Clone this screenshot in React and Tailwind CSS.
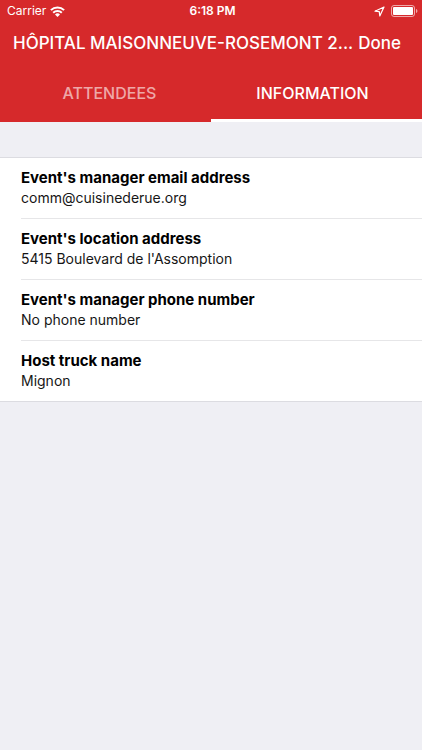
import React, { useState } from 'react';

const TABS = ['ATTENDEES', 'INFORMATION'];

const DETAILS = [
  { label: "Event's manager email address", value: 'comm@cuisinederue.org' },
  { label: "Event's location address", value: "5415 Boulevard de l'Assomption" },
  { label: "Event's manager phone number", value: 'No phone number' },
  { label: 'Host truck name', value: 'Mignon' },
];

function WifiIcon() {
  return (
    <svg width="15" height="11" viewBox="0 0 15 11" fill="none" stroke="currentColor" strokeWidth="2">
      <path d="M0.9 4.100a9.400 9.400 0 0 1 13.200 0" />
      <path d="M3.200 6.700a6.100 6.100 0 0 1 8.600 0" />
      <path d="M7.500 10.900 5 8.500a3.600 3.600 0 0 1 5 0Z" fill="currentColor" stroke="none" />
    </svg>
  );
}

function LocationIcon() {
  return (
    <svg width="11" height="11" viewBox="0 0 11 11" fill="none" stroke="currentColor" strokeWidth="1.2" strokeLinejoin="round">
      <path d="M10 1 1 5.200l4.300.5.5 4.300Z" />
    </svg>
  );
}

function BatteryIcon() {
  return (
    <svg width="27" height="12" viewBox="0 0 27 12" fill="none">
      <rect x="0.5" y="0.5" width="23" height="11" rx="2.5" stroke="currentColor" strokeOpacity="0.6" />
      <rect x="2" y="2" width="20" height="8" rx="1" fill="currentColor" />
      <path d="M25 4v4c.9-.3 1.400-1.100 1.400-2S25.900 4.300 25 4Z" fill="currentColor" fillOpacity="0.6" />
    </svg>
  );
}

function StatusBar() {
  return (
    <div className="grid h-[22px] grid-cols-[1fr_auto_1fr] items-center pr-1 pl-[7px] text-xs">
      <div className="flex items-center gap-1">
        <span>Carrier</span>
        <WifiIcon />
      </div>
      <span className="font-semibold">6:18 PM</span>
      <div className="flex items-center justify-end gap-1.5">
        <LocationIcon />
        <BatteryIcon />
      </div>
    </div>
  );
}

export default function App() {
  const [active, setActive] = useState('INFORMATION');

  return (
    <div className="min-h-screen bg-[#efeff4] font-[Inter,sans-serif] text-black">
      <header className="bg-[#d6292b] text-white">
        <StatusBar />

        {/* Title bar */}
        <div className="flex h-11 items-center justify-between pr-[21px] pl-[13px] text-[17px] font-medium">
          <h1 className="truncate">HÔPITAL MAISONNEUVE-ROSEMONT 2...</h1>
          <button className="shrink-0">Done</button>
        </div>

        {/* Tabs */}
        <div className="grid grid-cols-2 text-base font-medium">
          {TABS.map((tab) => (
            <button
              key={tab}
              onClick={() => setActive(tab)}
              className={`h-14 border-b-3 first:pl-2 last:pr-2 ${
                tab === active ? 'border-white text-white' : 'border-[#d6292b] text-white/60'
              }`}
            >
              {tab}
            </button>
          ))}
        </div>
      </header>

      {/* Event details */}
      <dl className="mt-[35px] border-y border-[#dcdce1] bg-white pl-[21px]">
        {DETAILS.map((item) => (
          <div
            key={item.label}
            className="h-[61px] border-b border-[#e6e6e8] pt-[10px] last:h-[60px] last:border-b-0"
          >
            <dt className="text-[15px] leading-5 font-bold">{item.label}</dt>
            <dd className="text-sm leading-5 text-[#161616]">{item.value}</dd>
          </div>
        ))}
      </dl>
    </div>
  );
}
